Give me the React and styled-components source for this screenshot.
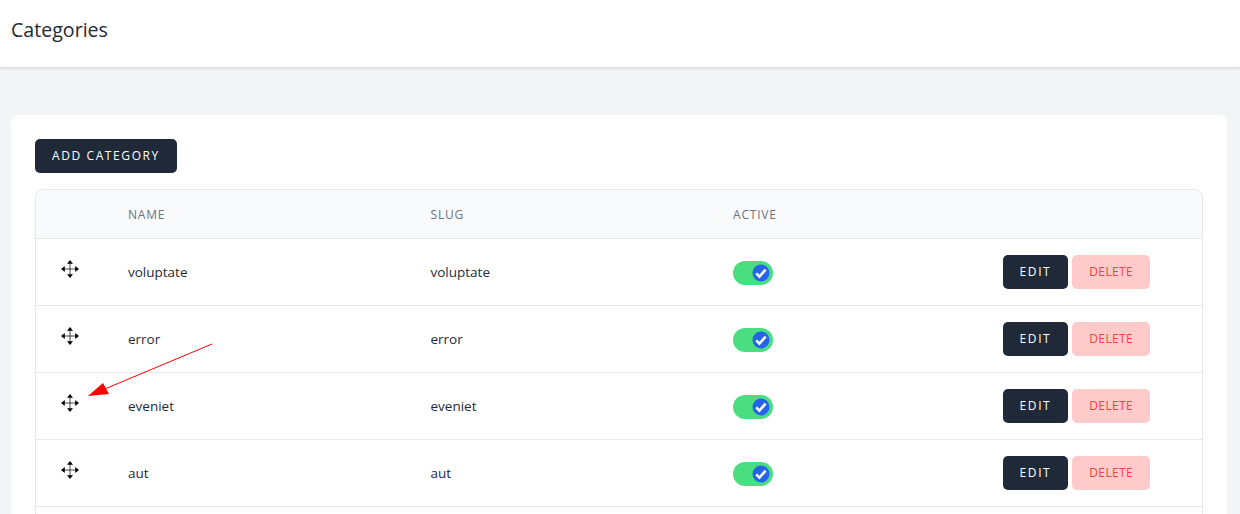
import React from 'react';
import styled, { createGlobalStyle } from 'styled-components';

const rows = ['voluptate', 'error', 'eveniet', 'aut'];

const GlobalStyle = createGlobalStyle`
  html, body {
    margin: 0;
    height: 514px;
    overflow: hidden;
    background: #f3f4f6;
    font-family: "Open Sans", "Noto Sans", sans-serif;
    color: #1f2937;
  }
`;

const Page = styled.div`
  position: relative;
  height: 514px;
  overflow: hidden;
`;

const Header = styled.header`
  height: 67px;
  padding: 0 11px;
  display: flex;
  align-items: center;
  background: #fff;
  box-shadow: 0 1px 3px rgba(0, 0, 0, 0.16);
`;

const Title = styled.h2`
  margin: 0 0 7px;
  font-size: 19.6px;
  line-height: 28px;
  font-weight: 500;
  color: #1f2937;
`;

const Main = styled.main`
  padding: 48px 13px 0 11px;
`;

const Card = styled.section`
  background: #fff;
  border-radius: 8px;
  padding: 24px;
`;

const Button = styled.button`
  height: 34px;
  padding: 0 17px 2px;
  border: 0;
  border-radius: 5px;
  background: ${(p) => (p.$danger ? '#fecaca' : '#1f2937')};
  color: ${(p) => (p.$danger ? '#ef4444' : '#fff')};
  font-family: inherit;
  font-size: 12px;
  letter-spacing: ${(p) => (p.$danger ? '0.35px' : '1.6px')};
  text-transform: uppercase;
  white-space: nowrap;
`;

const Table = styled.div`
  margin-top: 16px;
  padding-bottom: 40px;
  border: 1px solid #e5e7eb;
  border-radius: 8px 8px 0 0;
  overflow: hidden;
`;

const Row = styled.div`
  display: grid;
  grid-template-columns: 92px 302.5px 302.5px 1fr auto;
  align-items: center;
  height: 66px;
  padding-right: 52px;
  border-top: 1px solid #e5e7eb;
  font-size: 13.5px;
  &:last-child {
    border-bottom: 1px solid #e5e7eb;
  }
`;

const HeadRow = styled(Row)`
  height: 48px;
  border-top: 0;
  background: #f9fafb;
  color: #6b7280;
  font-size: 12px;
  letter-spacing: 0.8px;
  text-transform: uppercase;
`;

const Handle = styled.span`
  display: flex;
  padding: 0 0 7px 24px;
  color: #000;
`;

const Toggle = styled.span`
  position: relative;
  display: block;
  width: 40px;
  height: 24px;
  margin-top: 1px;
  border-radius: 12px;
  background: #4ade80;
`;

const Knob = styled.svg`
  position: absolute;
  top: 3px;
  right: 3px;
  width: 18px;
  height: 18px;
`;

const Actions = styled.div`
  display: flex;
  gap: 4px;
`;

const Annotation = styled.svg`
  position: absolute;
  left: 0;
  top: 0;
  pointer-events: none;
`;

function MoveIcon() {
  return (
    <svg width="20" height="20" viewBox="0 0 20 20" fill="currentColor">
      <path d="M10 4v12M4 10h12" stroke="currentColor" strokeOpacity="0.7" strokeWidth="1" fill="none" />
      <path d="M10 1l3 3.8H7zM10 19l-3-3.8h6zM1 10l3.8-3v6zM19 10l-3.8 3V7z" />
    </svg>
  );
}

function Switch() {
  return (
    <Toggle>
      <Knob viewBox="0 0 18 18">
        <circle cx="9" cy="9" r="8.5" fill="#2563eb" />
        <path d="M4.2 9.4l3.2 3.2 6.2-7" fill="none" stroke="#fff" strokeWidth="2.6" />
      </Knob>
    </Toggle>
  );
}

export default function App() {
  return (
    <Page>
      <GlobalStyle />
      <Header>
        <Title>Categories</Title>
      </Header>
      <Main>
        <Card>
          <Button>Add Category</Button>
          <Table>
            <HeadRow>
              <span />
              <span>Name</span>
              <span>Slug</span>
              <span>Active</span>
              <span />
            </HeadRow>
            {rows.map((name) => (
              <Row key={name}>
                <Handle>
                  <MoveIcon />
                </Handle>
                <span>{name}</span>
                <span>{name}</span>
                <Switch />
                <Actions>
                  <Button>Edit</Button>
                  <Button $danger>Delete</Button>
                </Actions>
              </Row>
            ))}
          </Table>
        </Card>
      </Main>
      <Annotation width="1240" height="514">
        <line x1="212" y1="344" x2="100" y2="391" stroke="#ff0000" strokeWidth="1" />
        <polygon points="88,396 103,383 109,394" fill="#ff0000" />
      </Annotation>
    </Page>
  );
}
